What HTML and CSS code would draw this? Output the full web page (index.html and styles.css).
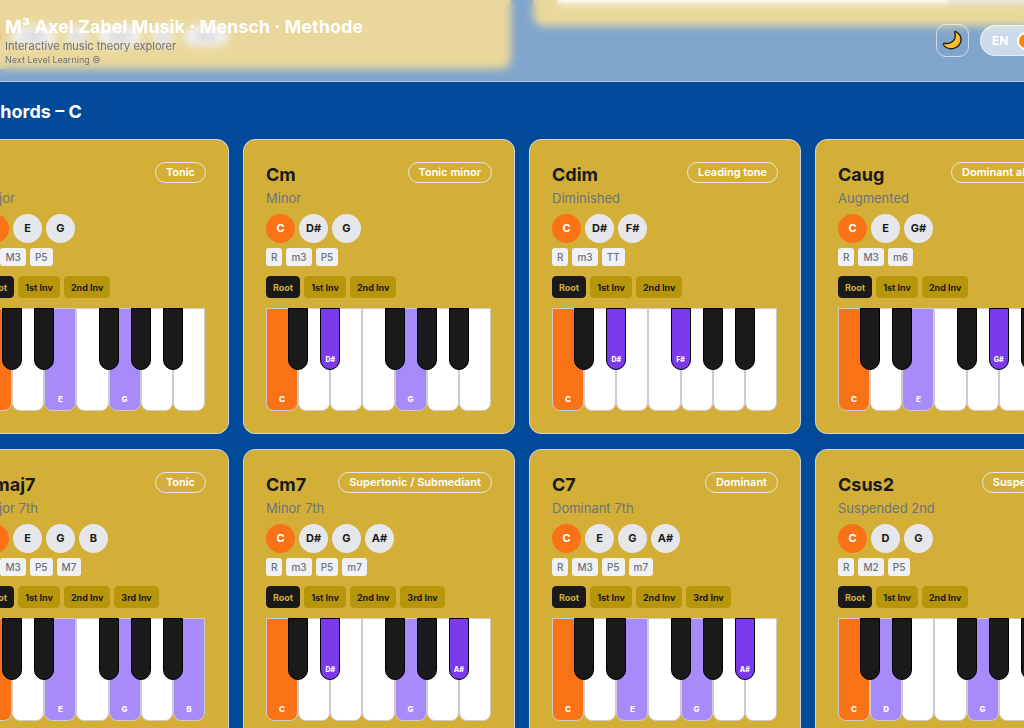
FILE: index.html
```html
<!DOCTYPE html>
<html lang="en">
    <head>
        <meta charset="utf-8">
        <title>M³ Axel Zabel</title>
        <link rel="stylesheet" href="styles.css">
    </head>
    <body>
        <header class="topbar">
            <div class="brand">
                <h1>M³ Axel Zabel Musik · Mensch · Methode</h1>
                <p class="tagline">Interactive music theory explorer</p>
                <p class="copy">Next Level Learning ©</p>
            </div>
            <div class="controls">
                <button class="theme-button" type="button" aria-label="Toggle theme">
                    <svg width="21" height="21" viewBox="0 0 22 22">
                        <path d="M14.5 1.6C18.6 3.6 20.9 8 19.6 12.3 17.6 18.9 9.6 21.6 3.6 17.8 2.5 17.1 1.7 16 1.4 14.8 1.3 14 2 13.6 2.8 13.9 6.6 15 11.2 13.2 13.2 9.6 14.4 7.4 14.3 5.1 13.4 2.8 13.1 2 13.6 1.3 14.5 1.6Z" fill="#fcc12d" stroke="#26221c" stroke-width="1.5" stroke-linejoin="round"/>
                        <path d="M17.8 6.6C19 10.4 16.6 15.2 12 17" fill="none" stroke="#f5a623" stroke-width="1"/>
                    </svg>
                </button>
                <button class="lang-switch" type="button">EN<span class="knob"></span></button>
            </div>
        </header>

        <div class="page">
            <section class="panels">
                <div class="panel panel-tall">
                    <div class="chips">
                        <span class="chip chip-root"></span>
                        <span class="chip chip-wide"></span>
                        <span class="chip"></span>
                        <span class="chip chip-wide"></span>
                        <span class="chip"></span>
                        <span class="chip chip-wide"></span>
                    </div>
                </div>
                <div class="panel panel-short">
                    <div class="sheet"></div>
                </div>
            </section>

            <h2>
                <svg width="22" height="20" viewBox="0 0 22 20">
                    <path d="M8 16V4l10-2v12" fill="none" stroke="white" stroke-width="2"/>
                    <circle cx="6" cy="16" r="3" fill="white"/>
                    <circle cx="16" cy="14" r="3" fill="white"/>
                </svg>
                Chords – C
            </h2>
            <main class="cards" id="cards"></main>
        </div>

        <script src="script.js"></script>
    </body>
</html>
```

FILE: styles.css
```css
* {
    box-sizing: border-box;
}

body {
    margin: 0;
    background-color: #004a99;
    color: #1a1a1a;
    font-family: Inter, "Liberation Sans", sans-serif;
    overflow: hidden;
}

h1, h2, h3, p {
    margin: 0;
}

button {
    font-family: inherit;
}

/* header */
.topbar {
    position: fixed;
    top: 0;
    left: 0;
    right: 0;
    z-index: 10;
    display: flex;
    justify-content: space-between;
    align-items: center;
    height: 82px;
    padding-left: 5px;
    background-color: rgba(255, 255, 255, 0.5);
    backdrop-filter: blur(4px);
    border-bottom: 1px solid rgba(255, 255, 255, 0.4);
}

.brand h1 {
    color: white;
    font-size: 18px;
    line-height: 22px;
    font-weight: 700;
}

.tagline {
    color: #6b7280;
    font-size: 11px;
    line-height: 16px;
}

.copy {
    color: #6b7280;
    font-size: 9px;
    line-height: 12px;
}

.controls {
    display: flex;
    gap: 11px;
    margin-right: -38px;
}

.theme-button {
    display: flex;
    align-items: center;
    justify-content: center;
    width: 33px;
    height: 33px;
    padding: 0;
    background: none;
    border: 1px solid rgba(255, 255, 255, 0.6);
    border-radius: 10px;
}

.lang-switch {
    display: flex;
    align-items: center;
    gap: 9px;
    width: 82px;
    height: 31px;
    margin-top: 1px;
    padding: 0 11px;
    color: white;
    font-size: 12px;
    font-weight: 700;
    background-color: rgba(255, 255, 255, 0.6);
    border: 1px solid rgba(255, 255, 255, 0.5);
    border-radius: 16px;
}

.knob {
    flex: none;
    width: 18px;
    height: 18px;
    background-color: #ff8500;
    border: 2px solid white;
    border-radius: 50%;
}

.page {
    margin: 0 -63px 0 -43px;
}

.panels {
    display: grid;
    grid-template-columns: 1fr 1fr;
    align-items: start;
    gap: 22px;
    height: 100px;
}

.panel {
    background-color: #d4af37;
    border-radius: 0 0 10px 10px;
}

.panel-tall {
    height: 69px;
    padding: 26px 0 0 23px;
}

.panel-short {
    height: 26px;
    padding: 0 24px;
}

.sheet {
    height: 4px;
    background: linear-gradient(to right, white 390px, #d1d5db 390px);
}

.chips {
    display: flex;
    gap: 10px;
}

.chip {
    display: flex;
    align-items: center;
    justify-content: center;
    width: 22px;
    height: 20px;
    background-color: #e5e7eb;
    border-radius: 10px;
}

.chip::after {
    content: "";
    width: 50%;
    height: 7px;
    background-color: #9ca3af;
}

.chip-wide {
    width: 44px;
}

.chip-root {
    background-color: #f97316;
}

.chip-root::after {
    background: none;
}

/* chord cards */
h2 {
    display: flex;
    align-items: center;
    gap: 8px;
    padding-bottom: 15px;
    color: white;
    font-size: 18px;
    line-height: 24px;
}

.cards {
    display: grid;
    grid-template-columns: repeat(4, 1fr);
    gap: 15px 14px;
}

.card {
    padding: 22px;
    background-color: #d4af37;
    border: 1px solid #d1d5db;
    border-radius: 12px;
}

.card-head {
    display: flex;
    justify-content: space-between;
    align-items: flex-start;
}

.card-head h3 {
    padding-top: 1px;
    font-size: 18px;
    line-height: 24px;
}

.badge {
    padding: 0 10px;
    color: white;
    font-size: 11px;
    line-height: 19px;
    font-weight: 600;
    white-space: nowrap;
    border: 1px solid #e5e7eb;
    border-radius: 11px;
}

.kind {
    padding-bottom: 5px;
    color: #6b7280;
    font-size: 13px;
    line-height: 22px;
}

.notes {
    display: flex;
    gap: 4px;
    padding-bottom: 5px;
}

.note {
    width: 29px;
    height: 29px;
    font-size: 11px;
    line-height: 29px;
    font-weight: 700;
    text-align: center;
    background-color: #e5e7eb;
    border-radius: 50%;
}

.note-root {
    color: white;
    background-color: #f97316;
}

.intervals {
    display: flex;
    gap: 4px;
    padding-bottom: 10px;
}

.interval {
    padding: 0 5px;
    color: #6b7280;
    font-size: 10px;
    line-height: 18px;
    font-weight: 500;
    background-color: #f0f1f4;
    border-radius: 3px;
}

.inversions {
    display: flex;
    gap: 4px;
    padding-bottom: 10px;
}

.inversion {
    height: 22px;
    padding: 0 6px;
    color: #1a1a1a;
    font-size: 9px;
    font-weight: 700;
    background-color: #b8960c;
    border: 1px solid #b8960c;
    border-radius: 4px;
}

.inversion-active {
    color: #d4af37;
    background-color: #1a1a1a;
    border-color: #1a1a1a;
}

/* piano */
.piano {
    display: flex;
    height: 103px;
    padding-right: 1px;
}

.white-key {
    position: relative;
    flex: 1;
    display: flex;
    justify-content: center;
    align-items: flex-end;
    padding-bottom: 6px;
    color: white;
    font-size: 8px;
    line-height: 10px;
    font-weight: 800;
    background-color: white;
    border: 1px solid #ccc;
    border-radius: 0 0 8px 8px;
}

.black-key {
    position: absolute;
    top: -1px;
    right: -11px;
    z-index: 1;
    display: flex;
    justify-content: center;
    align-items: flex-end;
    width: 20px;
    height: 62px;
    padding-bottom: 4px;
    font-size: 7px;
    background-color: #1a1a1a;
    border: 1px solid black;
    border-radius: 0 0 10px 10px;
}

.white-key.played {
    background-color: #a78bfa;
}

.white-key.root {
    background-color: #f97316;
}

.black-key.played {
    background-color: #7c3aed;
}
```

FILE: script.js
```js
const chords = [
    { name: "C", kind: "Major", role: "Tonic", notes: ["C", "E", "G"], intervals: ["R", "M3", "P5"] },
    { name: "Cm", kind: "Minor", role: "Tonic minor", notes: ["C", "D#", "G"], intervals: ["R", "m3", "P5"] },
    { name: "Cdim", kind: "Diminished", role: "Leading tone", notes: ["C", "D#", "F#"], intervals: ["R", "m3", "TT"] },
    { name: "Caug", kind: "Augmented", role: "Dominant altered", notes: ["C", "E", "G#"], intervals: ["R", "M3", "m6"] },
    { name: "Cmaj7", kind: "Major 7th", role: "Tonic", notes: ["C", "E", "G", "B"], intervals: ["R", "M3", "P5", "M7"] },
    { name: "Cm7", kind: "Minor 7th", role: "Supertonic / Submediant", notes: ["C", "D#", "G", "A#"], intervals: ["R", "m3", "P5", "m7"] },
    { name: "C7", kind: "Dominant 7th", role: "Dominant", notes: ["C", "E", "G", "A#"], intervals: ["R", "M3", "P5", "m7"] },
    { name: "Csus2", kind: "Suspended 2nd", role: "Suspended", notes: ["C", "D", "G"], intervals: ["R", "M2", "P5"] }
];

const inversions = ["Root", "1st Inv", "2nd Inv", "3rd Inv"];
const sharps = ["C", "D", "F", "G", "A"];

function piano(notes) {
    return ["C", "D", "E", "F", "G", "A", "B"].map((key) => {
        const played = notes.includes(key);
        const sharp = key + "#";
        const sharpPlayed = notes.includes(sharp);
        const black = sharps.includes(key)
            ? `<span class="black-key ${sharpPlayed ? "played" : ""}">${sharpPlayed ? sharp : ""}</span>`
            : "";
        return `<div class="white-key ${played ? "played" : ""} ${key == notes[0] ? "root" : ""}">${played ? key : ""}${black}</div>`;
    }).join("");
}

function card(chord) {
    return `
        <article class="card">
            <div class="card-head"><h3>${chord.name}</h3><span class="badge">${chord.role}</span></div>
            <p class="kind">${chord.kind}</p>
            <div class="notes">${chord.notes.map((n, i) => `<span class="note ${i == 0 ? "note-root" : ""}">${n}</span>`).join("")}</div>
            <div class="intervals">${chord.intervals.map((n) => `<span class="interval">${n}</span>`).join("")}</div>
            <div class="inversions">${chord.notes.map((n, i) => `<button type="button" class="inversion ${i == 0 ? "inversion-active" : ""}">${inversions[i]}</button>`).join("")}</div>
            <div class="piano">${piano(chord.notes)}</div>
        </article>`;
}

document.getElementById("cards").innerHTML = chords.map(card).join("");
```
